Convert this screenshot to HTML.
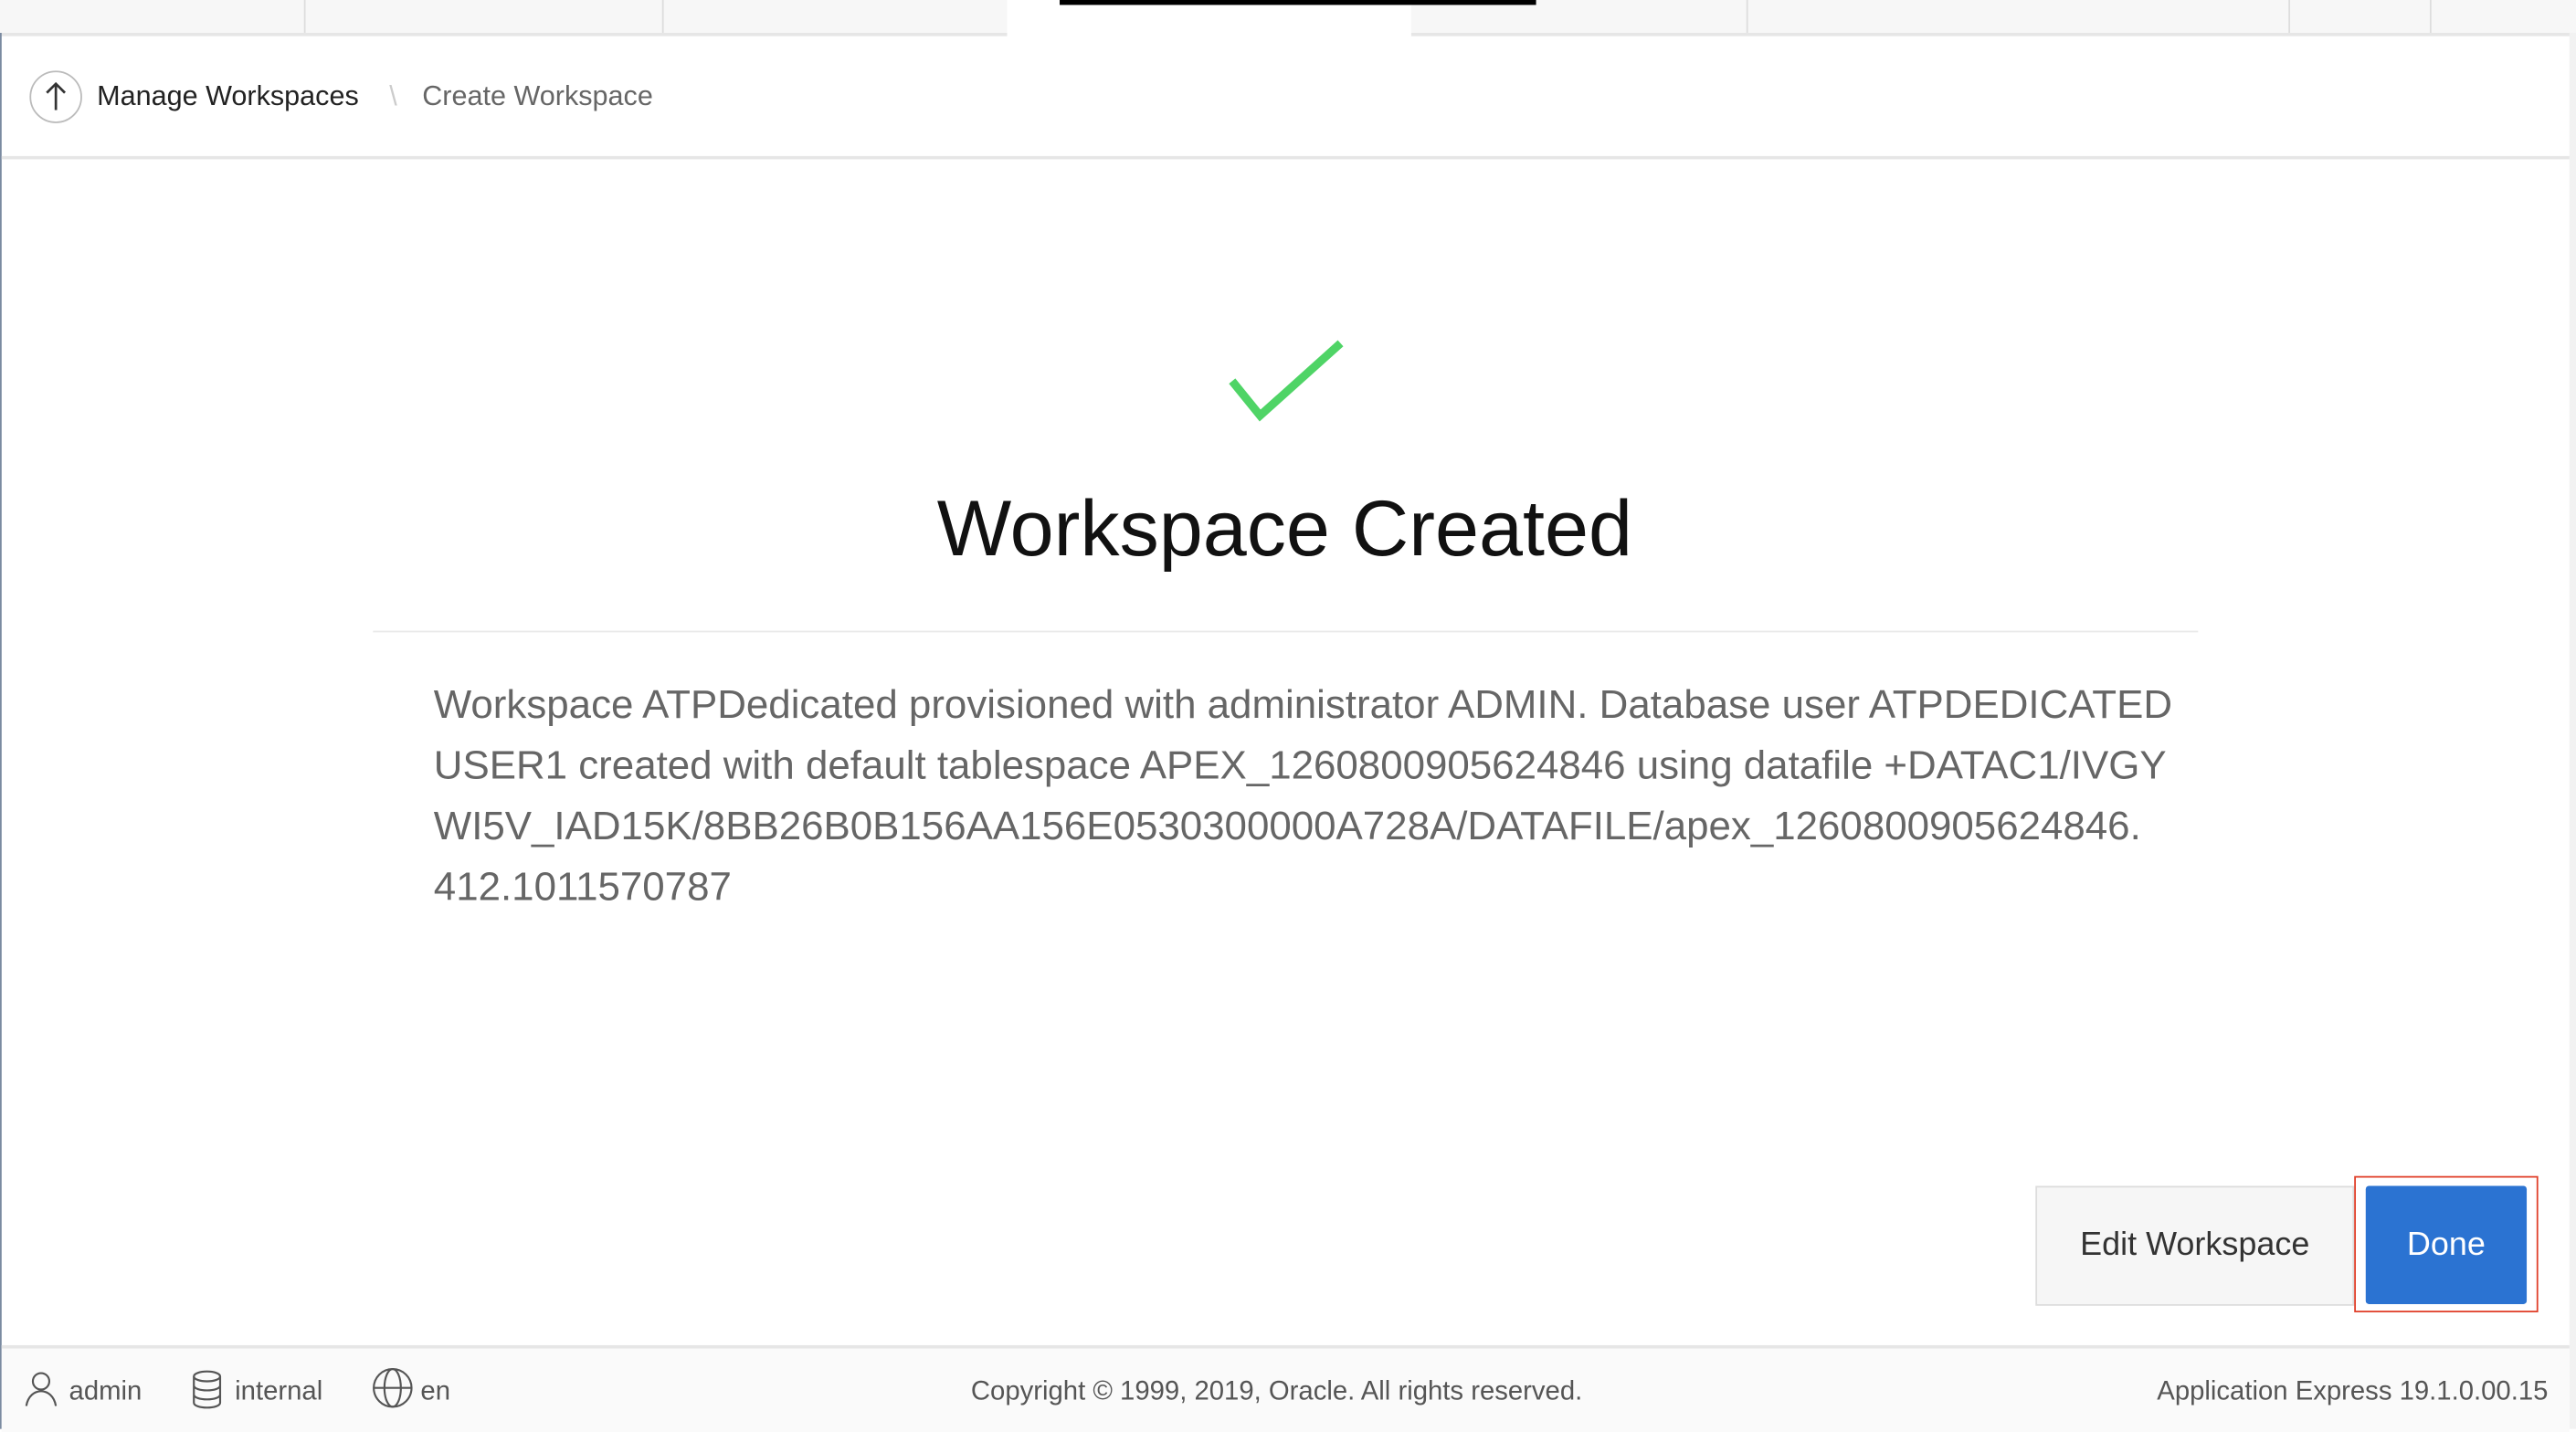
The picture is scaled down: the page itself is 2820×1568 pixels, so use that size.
<!DOCTYPE html>
<html><head><meta charset="utf-8"><style>
html,body{margin:0;padding:0;width:2820px;height:1564px;overflow:hidden;background:#fff}
#w{position:absolute;left:0;top:0;width:1568px;height:870px;transform:scale(1.79847);transform-origin:0 0;font-family:"Liberation Sans",sans-serif;background:#fff}
.a{position:absolute}
</style></head><body><div id="w">
<div class="a" style="left:0;top:0;width:1568px;height:20px;background:#f7f7f7;border-bottom:2px solid #e6e6e6"></div>
<div class="a" style="left:185px;top:0;width:1px;height:20px;background:#ddd"></div>
<div class="a" style="left:403px;top:0;width:1px;height:20px;background:#ddd"></div>
<div class="a" style="left:613px;top:0;width:246px;height:24px;background:#fff"></div>
<div class="a" style="left:1063px;top:0;width:1px;height:20px;background:#ddd"></div>
<div class="a" style="left:1393px;top:0;width:1px;height:20px;background:#ddd"></div>
<div class="a" style="left:1479px;top:0;width:1px;height:20px;background:#ddd"></div>
<div class="a" style="left:645px;top:0;width:290px;height:3px;background:#000"></div>
<div class="a" style="left:0;top:20px;width:1px;height:850px;background:#7a8aa0"></div>
<div class="a" style="left:1564px;top:20px;width:4px;height:850px;background:#f2f2f2"></div>
<div class="a" style="left:1px;top:95px;width:1563px;height:2px;background:#e6e6e6"></div>
<svg class="a" style="left:17px;top:42px" width="34" height="34" viewBox="0 0 34 34"><circle cx="17" cy="17" r="15.5" fill="#fff" stroke="#bbb"/><path d="M17 25V9M11.5 14.5L17 9l5.5 5.5" fill="none" stroke="#333" stroke-width="1.5"/></svg>
<div class="a" style="left:59px;top:49px;font-size:17px;color:#222">Manage Workspaces</div>
<div class="a" style="left:237px;top:49px;font-size:17px;color:#ccc">\</div>
<div class="a" style="left:257px;top:49px;font-size:17px;color:#666">Create Workspace</div>
<svg class="a" style="left:745px;top:203px" width="76" height="56"><path d="M5 29L22 50L71 6" fill="none" stroke="#4fd466" stroke-width="5"/></svg>
<div class="a" style="left:282px;top:295px;width:1000px;text-align:center;font-size:48px;color:#111">Workspace Created</div>
<div class="a" style="left:227px;top:384px;width:1111px;height:1px;background:#eaeaea"></div>
<div class="a" style="left:264px;top:411px;font-size:24.4px;line-height:37px;color:#666;white-space:nowrap">Workspace ATPDedicated provisioned with administrator ADMIN. Database user ATPDEDICATED<br>USER1 created with default tablespace APEX_1260800905624846 using datafile +DATAC1/IVGY<br>WI5V_IAD15K/8BB26B0B156AA156E0530300000A728A/DATAFILE/apex_1260800905624846.<br>412.1011570787</div>
<div class="a" style="left:1239px;top:722px;width:192px;height:71px;background:#f6f6f6;border:1px solid #ddd;font-size:20px;color:#333;line-height:71px;text-align:center">Edit Workspace</div>
<div class="a" style="left:1433px;top:716px;width:112px;height:83px;border:1.5px solid #e0402a;box-sizing:border-box"></div>
<div class="a" style="left:1440px;top:722px;width:98px;height:72px;background:#2b73d2;border-radius:2px;font-size:20px;color:#fff;line-height:72px;text-align:center">Done</div>
<div class="a" style="left:1px;top:819px;width:1563px;height:51px;background:#fafafa;border-top:2px solid #e6e6e6"></div>
<svg class="a" style="left:14px;top:834px" width="24" height="24"><circle cx="11" cy="7" r="5" fill="none" stroke="#555" stroke-width="1.2"/><path d="M2 22c1-6 5-9 9-9s8 3 9 9" fill="none" stroke="#555" stroke-width="1.2"/></svg>
<div class="a" style="left:42px;top:838px;font-size:16.3px;color:#555">admin</div>
<svg class="a" style="left:115px;top:833px" width="22" height="26"><g fill="none" stroke="#555" stroke-width="1.2"><ellipse cx="11" cy="5" rx="8" ry="3"/><path d="M3 5v16c0 2 4 3 8 3s8-1 8-3V5M3 10.5c0 2 4 3 8 3s8-1 8-3M3 16c0 2 4 3 8 3s8-1 8-3"/></g></svg>
<div class="a" style="left:143px;top:838px;font-size:16.3px;color:#555">internal</div>
<svg class="a" style="left:226px;top:832px" width="26" height="26"><g fill="none" stroke="#555" stroke-width="1.2"><circle cx="13" cy="13" r="11.5"/><ellipse cx="13" cy="13" rx="5" ry="11.5"/><path d="M1.5 13h23"/></g></svg>
<div class="a" style="left:256px;top:838px;font-size:16.3px;color:#555">en</div>
<div class="a" style="left:591px;top:838px;font-size:16.3px;color:#555">Copyright © 1999, 2019, Oracle. All rights reserved.</div>
<div class="a" style="right:17px;top:838px;font-size:16.3px;color:#555">Application Express 19.1.0.00.15</div>
</div></body></html>
